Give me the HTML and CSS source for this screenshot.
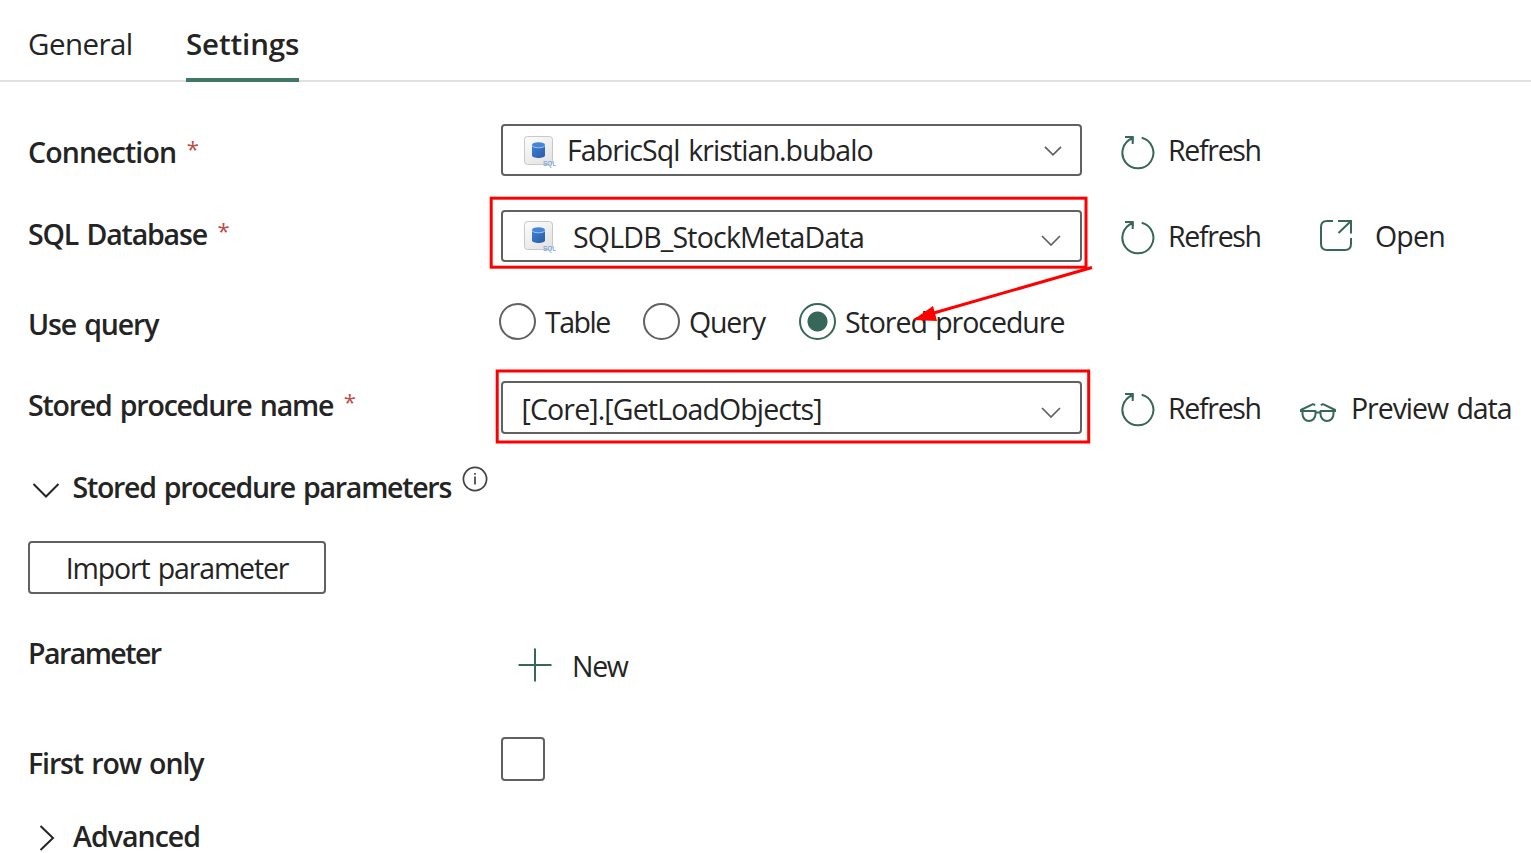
FILE: index.html
```
<!DOCTYPE html>
<html lang="en">
<head>
<meta charset="utf-8">
<title>Settings</title>
<link rel="stylesheet" href="styles.css">
</head>
<body>
<svg class="defs" aria-hidden="true">
  <linearGradient id="tile" x1="0" y1="0" x2="0.7" y2="1"><stop offset="0" stop-color="#fdfdfd"/><stop offset="1" stop-color="#e4e4e4"/></linearGradient>
  <linearGradient id="drum" x1="0" y1="0" x2="1" y2="1"><stop offset="0" stop-color="#3f7fd2"/><stop offset="1" stop-color="#2a5ca8"/></linearGradient>
  <symbol id="refresh" viewBox="0 0 35 35">
    <path d="M21.7 2.800A15.500 15.500 0 1 1 12.500 3.300M5 2H12.700V9" fill="none" stroke="#36675a" stroke-width="2"/>
    <path d="M8.500 2H13.500V7Z" fill="#36675a"/>
  </symbol>
</svg>
<main class="page">
  <nav class="tabs">
    <a class="tab tab-general">General</a>
    <a class="tab tab-active">Settings</a>
  </nav>

  <section class="row row-connection">
    <label class="label t-connection">Connection<span class="req">*</span></label>
    <div class="select">
      <svg class="db" viewBox="0 0 32 32"><rect x=".5" y=".5" width="28" height="28" rx="3" fill="url(#tile)" stroke="#c8c8c8"/><path d="M8 9v10.500c0 3.300 13 3.300 13 0V9z" fill="url(#drum)"/><ellipse cx="14.500" cy="9" rx="6.500" ry="2.700" fill="#4585d8"/><path d="M8 9.300c0 3.300 13 3.300 13 0" fill="none" stroke="#b9d6f6" stroke-width=".8"/><text x="19" y="29.500" class="db-text">SQL</text></svg>
      <span class="value v-connection">FabricSql kristian.bubalo</span>
      <svg class="chev chev-small" viewBox="0 0 18 10"><path d="M1 .8L9 8.800L17 .8"/></svg>
    </div>
    <div class="action"><svg class="refresh"><use href="#refresh"/></svg><span class="t-refresh">Refresh</span></div>
  </section>

  <section class="row row-database">
    <label class="label t-database">SQL Database<span class="req">*</span></label>
    <div class="select">
      <svg class="db" viewBox="0 0 32 32"><rect x=".5" y=".5" width="28" height="28" rx="3" fill="url(#tile)" stroke="#c8c8c8"/><path d="M8 9v10.500c0 3.300 13 3.300 13 0V9z" fill="url(#drum)"/><ellipse cx="14.500" cy="9" rx="6.500" ry="2.700" fill="#4585d8"/><path d="M8 9.300c0 3.300 13 3.300 13 0" fill="none" stroke="#b9d6f6" stroke-width=".8"/><text x="19" y="29.500" class="db-text">SQL</text></svg>
      <span class="value v-database">SQLDB_StockMetaData</span>
      <svg class="chev" viewBox="0 0 20 11"><path d="M1 1L10 10L19 1"/></svg>
    </div>
    <div class="action"><svg class="refresh"><use href="#refresh"/></svg><span class="t-refresh">Refresh</span></div>
    <div class="action action-open"><svg class="open" viewBox="0 0 34 33"><path d="M14 2H8Q2 2 2 8V25Q2 31 8 31H26Q32 31 32 25V19M19 2H32V14.500M32 2L19.500 14"/></svg><span class="t-open">Open</span></div>
  </section>

  <section class="row row-query">
    <label class="label t-query">Use query</label>
    <div class="radios">
      <span class="radio"></span><span class="option o-table">Table</span>
      <span class="radio"></span><span class="option o-query">Query</span>
      <span class="radio radio-on"></span><span class="option o-proc">Stored procedure</span>
    </div>
  </section>

  <section class="row row-proc">
    <label class="label t-proc">Stored procedure name<span class="req">*</span></label>
    <div class="select">
      <span class="value v-proc">[Core].[GetLoadObjects]</span>
      <svg class="chev" viewBox="0 0 20 11"><path d="M1 1L10 10L19 1"/></svg>
    </div>
    <div class="action"><svg class="refresh"><use href="#refresh"/></svg><span class="t-refresh">Refresh</span></div>
    <div class="action action-preview"><svg class="glasses" viewBox="0 0 36 21"><path d="M2.500 9H15.500V12A6.500 7 0 0 1 2.500 12ZM20.500 9H33.500V12A6.500 7 0 0 1 20.500 12ZM15.500 10.500H20.500M.8 10V8L13 2.200L15.200 3.200M35.200 10V8L23 2.200L20.800 3.200"/></svg><span class="t-preview">Preview data</span></div>
  </section>

  <section class="row row-params">
    <svg class="expand" viewBox="0 0 28 15"><path d="M1.500 1L14 13.500L26.500 1"/></svg>
    <span class="heading t-params">Stored procedure parameters</span>
    <svg class="info" viewBox="0 0 26 26"><circle cx="13" cy="13" r="11.600"/><path d="M13 10.500V18.500M13 7V8.800"/></svg>
  </section>

  <button class="import">Import parameter</button>

  <section class="row row-parameter">
    <label class="label t-parameter">Parameter</label>
    <div class="new"><svg class="plus" viewBox="0 0 34 34"><path d="M17 .5V33.500M.5 17H33.500"/></svg><span>New</span></div>
  </section>

  <section class="row row-first">
    <label class="label t-first">First row only</label>
    <span class="checkbox"></span>
  </section>

  <section class="row row-advanced">
    <svg class="collapse" viewBox="0 0 16 28"><path d="M1.500 2L14 14L1.500 26"/></svg>
    <span class="heading t-advanced">Advanced</span>
  </section>

  <svg class="annotations" viewBox="0 0 1531 853">
    <rect x="491.200" y="198.200" width="594.800" height="69"/>
    <rect x="497.200" y="371" width="591.500" height="71"/>
    <path d="M1092 267.500L932 313.500"/>
    <polygon points="913,320 933,306 937,321"/>
  </svg>
</main>
</body>
</html>
```

FILE: styles.css
```
* { box-sizing: border-box; }
body { margin: 0; background: #fff; }
.defs { display: block; width: 0; height: 0; }
.page {
  position: relative;
  width: 1531px;
  height: 853px;
  overflow: hidden;
  color: #242424;
  font: 400 28.5px/40px "Open Sans", "Noto Sans", sans-serif;
  word-spacing: 2px;
  white-space: nowrap;
}

.tabs { display: flex; height: 82px; padding: 24px 0 0 28px; border-bottom: 2px solid #e0e0e0; }
.tab { height: 58px; font-size: 29.5px; }
.tab-general { width: 158px; letter-spacing: -0.55px; }
.tab-active { width: 113px; font-weight: 600; letter-spacing: -0.12px; border-bottom: 4px solid #417864; }

.row { display: flex; align-items: flex-start; padding-left: 28px; }
.label { width: 473px; flex: none; font-weight: 600; }
.heading { font-weight: 600; }
.req { margin-left: 10.5px; color: #bc4b45; font-weight: 400; font-size: 22px; line-height: 0; letter-spacing: 0; vertical-align: 6px; }

.row-connection { height: 52px; margin-top: 42px; }
.row-database { height: 52px; margin-top: 34px; }
.row-query { height: 40px; margin-top: 40px; }
.row-proc { height: 53px; margin-top: 39px; }
.row-params { height: 46px; margin-top: 31px; }
.row-parameter { height: 54px; margin-top: 38px; }
.row-first { height: 44px; margin-top: 51px; }
.row-advanced { height: 37px; margin-top: 35px; }

.t-connection { padding-top: 8px; letter-spacing: -0.88px; }
.t-database { padding-top: 4px; letter-spacing: -1.15px; }
.t-query { padding-top: 2px; letter-spacing: -1.15px; }
.t-proc { padding-top: 4px; letter-spacing: -1.2px; }
.t-parameter { padding-top: 1px; letter-spacing: -1.55px; }
.t-first { padding-top: 6px; letter-spacing: -1.12px; }

.select { display: flex; flex: none; width: 581px; height: 100%; border: 2px solid #616161; border-radius: 4px; padding: 0 19px 0 18.5px; }
.db { width: 32px; height: 32px; margin: 10px 0 0 2.5px; overflow: visible; }
.row-database .db { margin-top: 9px; }
.db-text { font: 6.5px "Liberation Sans", sans-serif; fill: #5b8fd6; letter-spacing: 0; }
.v-connection { margin: 4px 0 0 11px; letter-spacing: -0.9px; }
.v-database { margin: 5px 0 0 17px; letter-spacing: -0.79px; }
.v-proc { margin-top: 6px; letter-spacing: -0.86px; }
.chev { width: 20px; height: 11px; margin: 22.5px 0.5px 0 auto; }
.row-proc .chev { margin-top: 23.5px; }
.chev-small { width: 18px; height: 10px; margin: 19.5px -1px 0 auto; }
.chev path { fill: none; stroke: #616161; stroke-width: 1.7; }

.action { display: flex; flex: none; padding-top: 6px; margin-left: 38px; letter-spacing: -1.3px; }
.row-proc .action { padding-top: 7px; }
.refresh { width: 35px; height: 35px; margin: 4.5px 13px 0 0; }
.row-database .refresh, .row-proc .refresh { margin-top: 3.5px; }
.t-refresh { width: 92px; }
.action-open { margin-left: 59px; letter-spacing: -0.82px; }
.open { width: 34px; height: 33px; margin: 3px 22px 0 0; fill: none; stroke: #36675a; stroke-width: 2; }
.action-preview { margin-left: 40px; letter-spacing: -1.04px; }
.glasses { width: 36px; height: 21px; margin: 14px 15px 0 0; fill: none; stroke: #36675a; stroke-width: 2; stroke-linejoin: round; }

.radios { display: flex; margin-left: -2px; }
.radio { width: 37px; height: 37px; margin-top: 1px; border: 2px solid #616161; border-radius: 50%; }
.radio-on { border-color: #36675a; background: radial-gradient(circle, #36675a 9.6px, transparent 10.4px); }
.option { margin-left: 9px; }
.o-table { width: 98px; letter-spacing: -1.5px; }
.o-query { width: 110px; letter-spacing: -1.15px; }
.o-proc { letter-spacing: -1.03px; }

.expand { width: 28px; height: 15px; margin: 18px 13px 0 3.500px; }
.expand path, .collapse path { fill: none; stroke: #242424; stroke-width: 2; }
.t-params { width: 389px; padding-top: 2px; letter-spacing: -1.27px; }
.info { width: 26px; height: 26px; margin-top: 1px; fill: none; stroke: #424242; stroke-width: 1.7; }

.import {
  display: block;
  width: 298px;
  height: 53px;
  margin: 30px 0 0 28px;
  padding: 0;
  border: 2px solid #616161;
  border-radius: 4px;
  background: #fff;
  color: inherit;
  font: inherit;
  letter-spacing: -1.15px;
  word-spacing: 2px;
}
.new { display: flex; margin: 14px 0 0 17px; letter-spacing: -1.3px; }
.plus { width: 34px; height: 34px; margin: 1.5px 20px 0 0; fill: none; stroke: #36675a; stroke-width: 2; }
.checkbox { width: 44px; height: 44px; border: 2px solid #616161; border-radius: 4px; }
.collapse { width: 16px; height: 28px; margin: 8px 18.5px 0 10.5px; }
.t-advanced { padding-top: 3px; line-height: 34px; letter-spacing: -0.96px; }

/* Highlight boxes and arrow drawn over the form */
.annotations { position: absolute; inset: 0; width: 1531px; height: 853px; fill: none; stroke: #f00; stroke-width: 3; pointer-events: none; }
.annotations polygon { fill: #f00; stroke: none; }
```
